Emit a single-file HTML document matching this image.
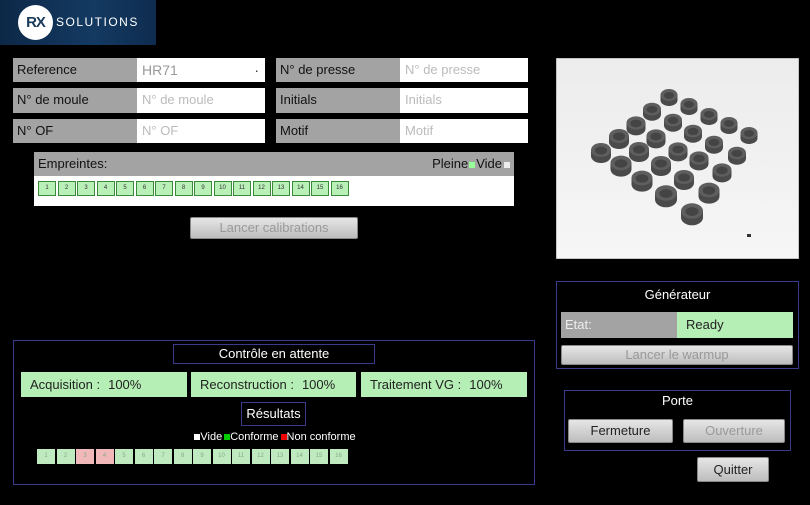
<!DOCTYPE html>
<html><head><meta charset="utf-8"><style>
*{margin:0;padding:0;box-sizing:border-box}
body{width:810px;height:505px;background:#000;position:relative;overflow:hidden;font-family:"Liberation Sans",sans-serif;font-size:13px;color:#111}
.a{position:absolute}
.lbl{background:#a3a3a3;color:#111;padding-left:4px;line-height:24px;font-size:13px}
.inp{background:#fff;color:#bbb;padding-left:5px;line-height:24px;font-size:13px}
.btn{background:linear-gradient(#e6e6e6,#bdbdbd);border:1px solid #888;border-radius:2px;text-align:center;color:#999;font-size:13px}
.box{border:1px solid #3b3b8c}
.cell{position:absolute;width:18px;height:15px;border:1px solid #3a8a3a;background:#b8f0b8;font-size:6px;text-align:center;line-height:13px;color:#333}
.cell2{position:absolute;width:18px;height:15px;background:#bfeabf;font-size:6px;text-align:center;line-height:15px;color:#8a8}
.prog{background:#b6efb6;color:#222;line-height:25px;font-size:13px;padding-left:9px}
.prog b{font-weight:normal;margin-left:8px}
</style></head><body>
<div class="a" style="left:0;top:0;width:156px;height:45px;background:linear-gradient(90deg,#0c2847,#143a62 60%,#0e2c4f)"></div>
<div class="a" style="left:18px;top:5px;width:35px;height:35px;border-radius:50%;background:#fff;color:#1a3a5a;font-size:15px;line-height:35px;text-align:center;font-weight:bold;letter-spacing:-1px">RX</div>
<div class="a" style="left:56px;top:15px;color:#fff;font-size:12px;letter-spacing:1.5px">SOLUTIONS</div>

<div class="a lbl" style="left:13px;top:58px;width:124px;height:24px">Reference</div>
<div class="a inp" style="left:137px;top:58px;width:128px;height:24px;color:#999;font-size:14px">HR71<span style="position:absolute;right:6px;color:#333">·</span></div>
<div class="a lbl" style="left:13px;top:88px;width:124px;height:25px">N° de moule</div>
<div class="a inp" style="left:137px;top:88px;width:128px;height:25px">N° de moule</div>
<div class="a lbl" style="left:13px;top:119px;width:124px;height:24px">N° OF</div>
<div class="a inp" style="left:137px;top:119px;width:128px;height:24px">N° OF</div>
<div class="a lbl" style="left:276px;top:58px;width:124px;height:24px">N° de presse</div>
<div class="a inp" style="left:400px;top:58px;width:128px;height:24px">N° de presse</div>
<div class="a lbl" style="left:276px;top:88px;width:124px;height:25px">Initials</div>
<div class="a inp" style="left:400px;top:88px;width:128px;height:25px">Initials</div>
<div class="a lbl" style="left:276px;top:119px;width:124px;height:24px">Motif</div>
<div class="a inp" style="left:400px;top:119px;width:128px;height:24px">Motif</div>

<div class="a" style="left:34px;top:152px;width:480px;height:54px;background:#fff"></div>
<div class="a lbl" style="left:34px;top:152px;width:480px;height:24px;padding-left:4px">Empreintes:<span style="position:absolute;right:4px">Pleine<span style="display:inline-block;width:6px;height:6px;background:#9f9;margin:0 1px"></span>Vide<span style="display:inline-block;width:6px;height:6px;background:#eee;margin-left:2px"></span></span></div>
<div class="a btn" style="left:190px;top:217px;width:168px;height:22px;line-height:20px">Lancer calibrations</div>

<svg class="a" style="left:556px;top:58px" width="243" height="201" viewBox="556 58 243 201">
<defs><linearGradient id="bg" x1="0" y1="0" x2="0" y2="1"><stop offset="0" stop-color="#ececec"/><stop offset="1" stop-color="#f6f6f6"/></linearGradient>
<g id="r"><rect x="-10" y="0" width="20" height="6" fill="#4a4a4a"/><ellipse cx="0" cy="6" rx="10" ry="7" fill="#4a4a4a"/><ellipse cx="0" cy="0" rx="10" ry="7" fill="#5e5e5e"/><ellipse cx="0" cy="0.5" rx="6" ry="4" fill="#444"/></g></defs>
<rect x="556" y="58" width="243" height="201" fill="url(#bg)" stroke="#999"/>
<g>
<use href="#r" transform="translate(669,95) scale(.85)"/><use href="#r" transform="translate(689,104) scale(.85)"/><use href="#r" transform="translate(709,114) scale(.85)"/><use href="#r" transform="translate(729,123) scale(.85)"/><use href="#r" transform="translate(749,133) scale(.85)"/>
<use href="#r" transform="translate(652,109) scale(.9)"/><use href="#r" transform="translate(673,120) scale(.9)"/><use href="#r" transform="translate(693,131) scale(.9)"/><use href="#r" transform="translate(714,142) scale(.9)"/><use href="#r" transform="translate(737,153) scale(.9)"/>
<use href="#r" transform="translate(636,123) scale(.95)"/><use href="#r" transform="translate(656,136) scale(.95)"/><use href="#r" transform="translate(678,149) scale(.95)"/><use href="#r" transform="translate(699,158) scale(.95)"/><use href="#r" transform="translate(722,170) scale(.95)"/>
<use href="#r" transform="translate(619,136) scale(1)"/><use href="#r" transform="translate(639,149) scale(1)"/><use href="#r" transform="translate(661,163) scale(1)"/><use href="#r" transform="translate(684,177) scale(1)"/><use href="#r" transform="translate(709,190) scale(1.05)"/>
<use href="#r" transform="translate(601,150) scale(1)"/><use href="#r" transform="translate(621,163) scale(1.05)"/><use href="#r" transform="translate(642,178) scale(1.05)"/><use href="#r" transform="translate(666,193) scale(1.1)"/><use href="#r" transform="translate(692,211) scale(1.1)"/>
</g>
<rect x="747" y="234" width="4" height="3" fill="#333"/>
</svg>

<div class="a box" style="left:556px;top:281px;width:243px;height:88px"></div>
<div class="a" style="left:556px;top:287px;width:243px;text-align:center;color:#fff;font-size:13px">Générateur</div>
<div class="a lbl" style="left:561px;top:312px;width:116px;height:26px;line-height:26px;color:#eee">Etat:</div>
<div class="a prog" style="left:677px;top:312px;width:116px;height:26px;line-height:26px">Ready</div>
<div class="a btn" style="left:561px;top:345px;width:232px;height:20px;line-height:18px">Lancer le warmup</div>

<div class="a box" style="left:564px;top:390px;width:227px;height:61px"></div>
<div class="a" style="left:564px;top:393px;width:227px;text-align:center;color:#fff">Porte</div>
<div class="a btn" style="left:568px;top:419px;width:105px;height:24px;line-height:22px;color:#222">Fermeture</div>
<div class="a btn" style="left:683px;top:419px;width:102px;height:24px;line-height:22px">Ouverture</div>
<div class="a btn" style="left:697px;top:457px;width:72px;height:25px;line-height:23px;color:#222">Quitter</div>

<div class="a box" style="left:13px;top:340px;width:522px;height:145px"></div>
<div class="a box" style="left:173px;top:344px;width:202px;height:20px;color:#fff;text-align:center;line-height:18px">Contrôle en attente</div>
<div class="a prog" style="left:21px;top:372px;width:166px;height:25px">Acquisition :<b>100%</b></div>
<div class="a prog" style="left:191px;top:372px;width:165px;height:25px">Reconstruction :<b>100%</b></div>
<div class="a prog" style="left:361px;top:372px;width:166px;height:25px">Traitement VG :<b>100%</b></div>
<div class="a box" style="left:241px;top:402px;width:65px;height:24px;color:#fff;text-align:center;line-height:22px">Résultats</div>
<div class="a" style="left:150px;top:431px;width:250px;text-align:center;color:#fff;font-size:11px"><span style="display:inline-block;width:6px;height:6px;background:#fff"></span>Vide<span style="display:inline-block;width:6px;height:6px;background:#0c0;margin-left:2px"></span>Conforme<span style="display:inline-block;width:6px;height:6px;background:#e00;margin-left:2px"></span>Non conforme</div>

<div class="cell" style="left:38px;top:181px">1</div><div class="cell" style="left:57.5px;top:181px">2</div><div class="cell" style="left:77px;top:181px">3</div><div class="cell" style="left:96.5px;top:181px">4</div><div class="cell" style="left:116px;top:181px">5</div><div class="cell" style="left:135.5px;top:181px">6</div><div class="cell" style="left:155px;top:181px">7</div><div class="cell" style="left:174.5px;top:181px">8</div><div class="cell" style="left:194px;top:181px">9</div><div class="cell" style="left:213.5px;top:181px">10</div><div class="cell" style="left:233px;top:181px">11</div><div class="cell" style="left:252.5px;top:181px">12</div><div class="cell" style="left:272px;top:181px">13</div><div class="cell" style="left:291.5px;top:181px">14</div><div class="cell" style="left:311px;top:181px">15</div><div class="cell" style="left:330.5px;top:181px">16</div>

<div class="cell2" style="left:37px;top:449px">1</div><div class="cell2" style="left:56.5px;top:449px">2</div><div class="cell2" style="left:76px;top:449px;background:#f0b8b8">3</div><div class="cell2" style="left:95.5px;top:449px;background:#f0b8b8">4</div><div class="cell2" style="left:115px;top:449px">5</div><div class="cell2" style="left:134.5px;top:449px">6</div><div class="cell2" style="left:154px;top:449px">7</div><div class="cell2" style="left:173.5px;top:449px">8</div><div class="cell2" style="left:193px;top:449px">9</div><div class="cell2" style="left:212.5px;top:449px">10</div><div class="cell2" style="left:232px;top:449px">11</div><div class="cell2" style="left:251.5px;top:449px">12</div><div class="cell2" style="left:271px;top:449px">13</div><div class="cell2" style="left:290.5px;top:449px">14</div><div class="cell2" style="left:310px;top:449px">15</div><div class="cell2" style="left:329.5px;top:449px">16</div>
</body></html>
